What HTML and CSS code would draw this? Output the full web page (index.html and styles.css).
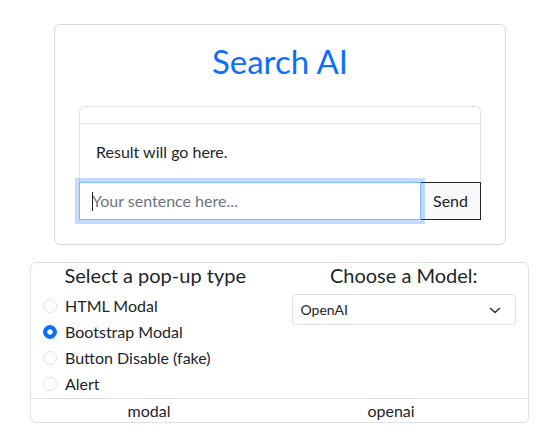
FILE: index.html
```html
<!DOCTYPE html>
<html lang="en">
<head>
<meta charset="utf-8">
<title>Search AI</title>
<link rel="stylesheet" href="styles.css">
</head>
<body>
<div class="page">
  <section class="card search-card">
    <h1 class="title">Search AI</h1>
    <div class="result">
      <div class="result-box">
        <div class="result-header"></div>
        <div class="result-body"><p>Result will go here.</p></div>
      </div>
      <div class="input-group">
        <div class="input-wrap">
          <input class="input" type="text" placeholder="Your sentence here...">
          <span class="caret"></span>
        </div>
        <button class="send" type="button">Send</button>
      </div>
    </div>
  </section>

  <section class="card options-card">
    <div class="options-row">
      <div class="col">
        <h5 class="col-title">Select a pop-up type</h5>
        <label class="check"><input class="radio" type="radio" name="popup">HTML Modal</label>
        <label class="check"><input class="radio" type="radio" name="popup" checked>Bootstrap Modal</label>
        <label class="check"><input class="radio" type="radio" name="popup">Button Disable (fake)</label>
        <label class="check"><input class="radio" type="radio" name="popup">Alert</label>
      </div>
      <div class="col">
        <h5 class="col-title">Choose a Model:</h5>
        <div class="select">
          <span>OpenAI</span>
          <svg class="chevron" width="16" height="12" viewBox="0 0 16 12" aria-hidden="true"><path d="M3.5 4.5 8 8.5l4.5-4" fill="none" stroke="#343a40" stroke-width="1.6" stroke-linecap="round" stroke-linejoin="round"/></svg>
        </div>
      </div>
    </div>
    <div class="options-footer">
      <span>modal</span>
      <span>openai</span>
    </div>
  </section>
</div>
</body>
</html>
```
FILE: styles.css
```css
body {
  margin: 0;
  font-family: "Segoe UI", Lato, "Noto Sans", sans-serif;
  font-size: 16px;
  line-height: 1.5;
  color: #212529;
  background: #fff;
}

.page {
  padding-top: 24px;
}

.card {
  box-sizing: border-box;
  background: #fff;
  border: 1px solid #d8d8d8;
  border-radius: 6px;
}

.search-card {
  width: 452px;
  margin-left: 54px;
  padding: 16px 24px 24px;
}

.title {
  margin: 0 0 25px;
  font-size: 33px;
  line-height: 40px;
  font-weight: 400;
  color: #0d6efd;
  text-align: center;
}

.result-box {
  border: 1px solid #dee2e6;
  border-bottom: 0;
  border-radius: 6px 6px 0 0;
}

.result-header {
  height: 16px;
  border-bottom: 1px solid #dee2e6;
}

.result-body {
  padding: 16px 16px 18px;
}

.result-body p {
  margin: 0;
}

.input-group {
  display: flex;
  height: 38px;
}

.input-wrap {
  position: relative;
  flex: 1;
  display: flex;
  z-index: 1;
}

.input {
  flex: 1;
  width: 100%;
  box-sizing: border-box;
  margin: 0;
  padding: 6px 12px;
  border: 1px solid #86b7fe;
  border-radius: 0;
  box-shadow: 0 0 0 4px rgba(13, 110, 253, 0.25);
  outline: none;
  font: inherit;
  color: #212529;
  caret-color: transparent;
  background: #fff;
}

.input::placeholder {
  color: #6c757d;
}

.caret {
  position: absolute;
  left: 13px;
  top: 10px;
  width: 1px;
  height: 19px;
  background: #212529;
}

.send {
  margin: 0 0 0 -1px;
  padding: 6px 12px;
  border: 1px solid #212529;
  border-radius: 0;
  background: #f8f9fa;
  font: inherit;
  color: #212529;
}

.options-card {
  width: 499px;
  margin: 17px 0 0 30px;
  border-color: #dee2e6;
}

.options-row {
  display: grid;
  grid-template-columns: 1fr 1fr;
}

.col {
  padding: 0 12px;
}

.col-title {
  margin: 0 0 7px;
  font-size: 20px;
  line-height: 24px;
  font-weight: 400;
  text-align: center;
}

.check {
  display: flex;
  align-items: center;
  gap: 8px;
  height: 24px;
  margin-bottom: 2px;
}

.radio {
  appearance: none;
  -webkit-appearance: none;
  box-sizing: border-box;
  width: 14px;
  height: 14px;
  margin: 0;
  flex: none;
  border: 1px solid #dee2e6;
  border-radius: 50%;
  background: #fff;
}

.radio:checked {
  border-color: #0d6efd;
  background: radial-gradient(circle, #fff 0 2.4px, #0d6efd 3px);
}

.select {
  box-sizing: border-box;
  height: 31px;
  display: flex;
  align-items: center;
  justify-content: space-between;
  padding: 0 12px 0 8px;
  border: 1px solid #dee2e6;
  border-radius: 4px;
  font-size: 14px;
}

.chevron {
  display: block;
}

.options-footer {
  display: grid;
  grid-template-columns: 236px 248px;
  border-top: 1px solid #dee2e6;
  line-height: 23px;
  text-align: center;
}
```
